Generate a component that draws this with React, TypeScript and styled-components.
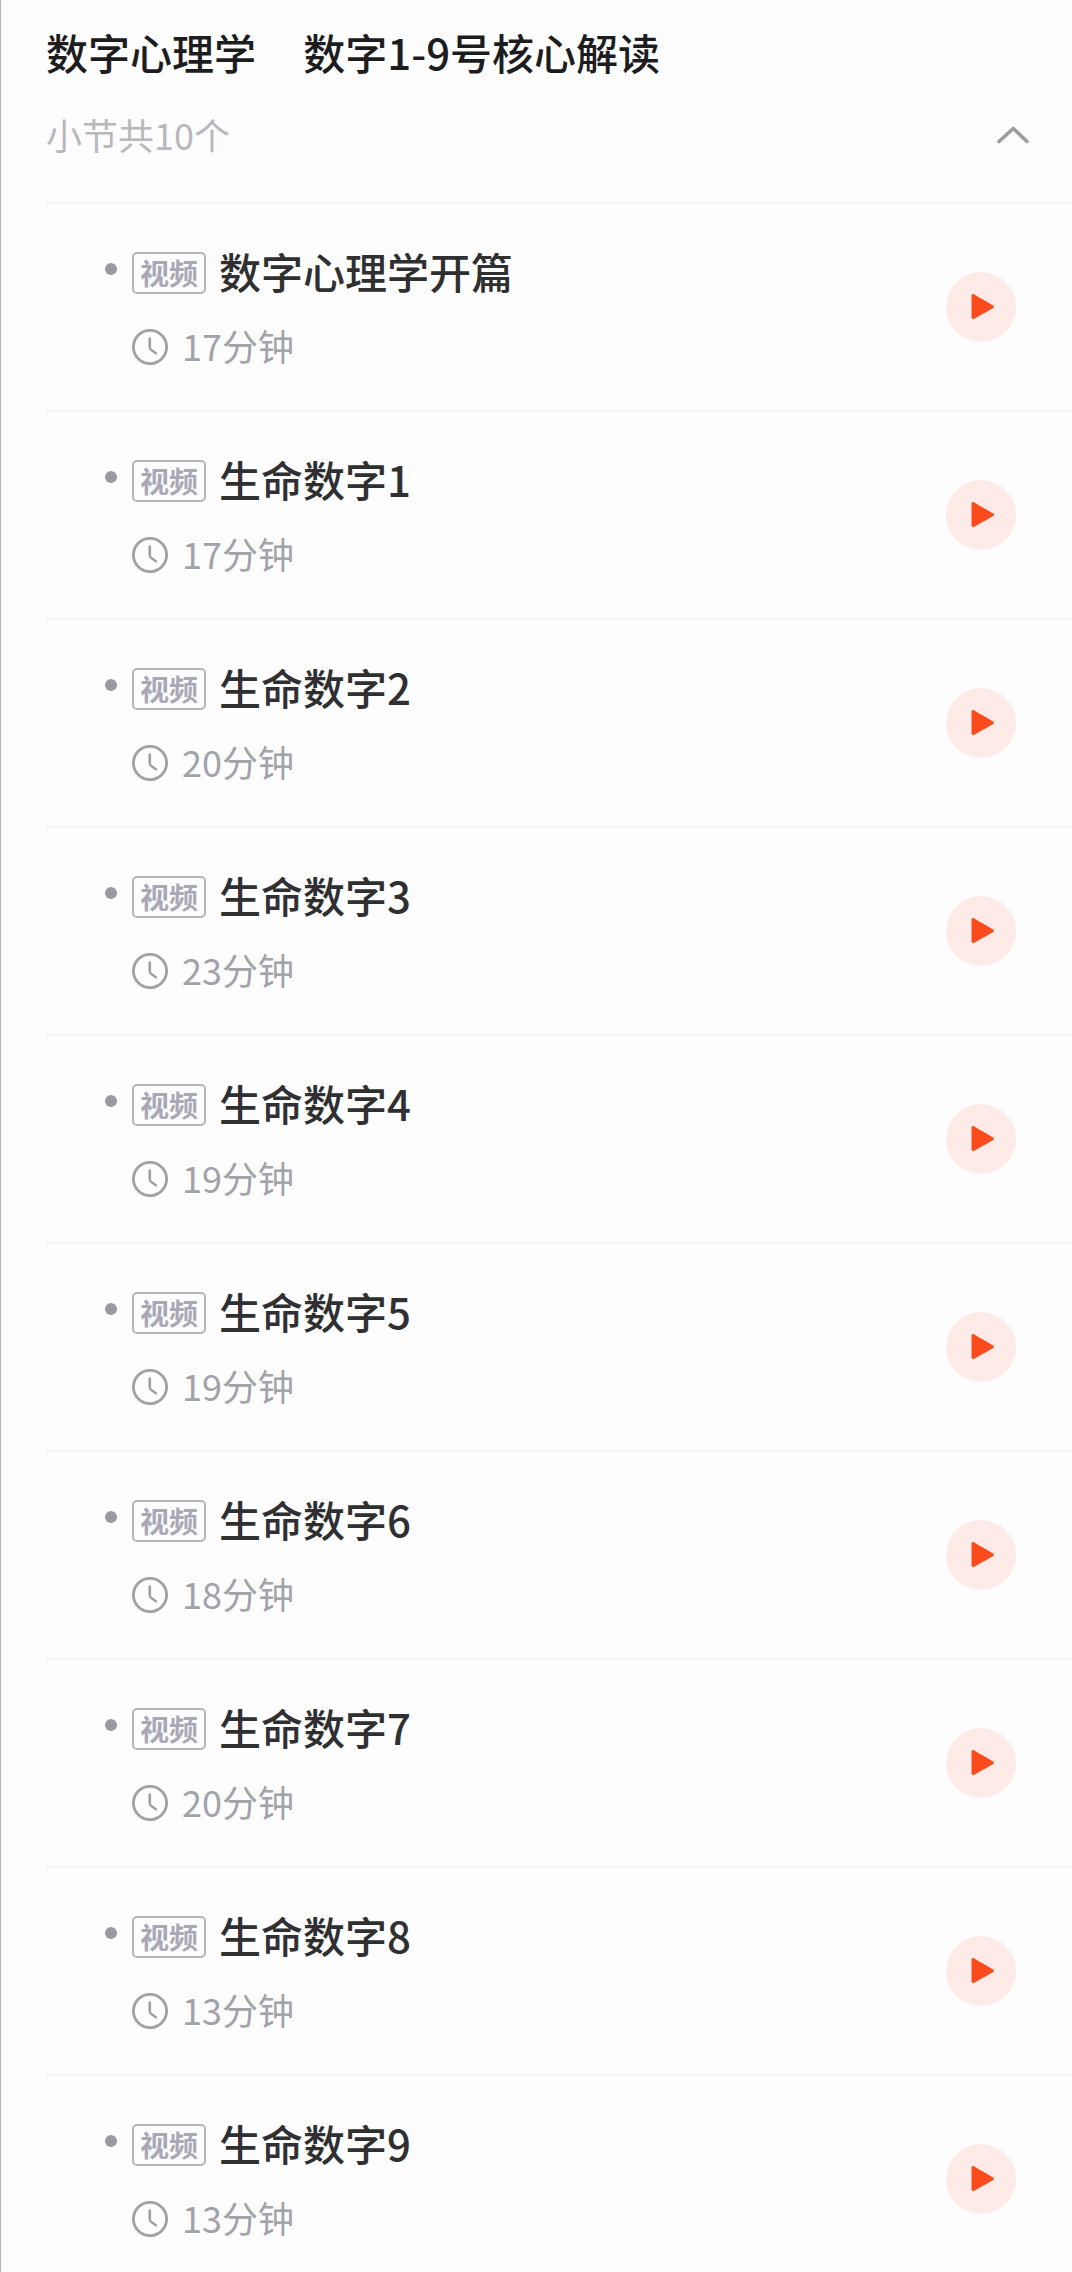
import { useState } from 'react';
import styled, { createGlobalStyle } from 'styled-components';

type Lesson = {
	title: string;
	minutes: number;
};

const AppColor = {
	pageBg: '#fdfdfd',
	edge: '#b4b4b4',
	line: '#f3f3f4',
	heading: '#1d1d1f',
	text: '#303032',
	subText: '#b8b8bc',
	grayText: '#a2a2aa',
	icon: '#a0a0a6',
	tag: '#a9a8b7',
	tagBorder: '#b4b4ba',
	dot: '#9a9aa6',
	point: '#fc4a1c',
	pointBg: '#feebe8',
};

const lessons: Lesson[] = [
	{ title: '数字心理学开篇', minutes: 17 },
	{ title: '生命数字1', minutes: 17 },
	{ title: '生命数字2', minutes: 20 },
	{ title: '生命数字3', minutes: 23 },
	{ title: '生命数字4', minutes: 19 },
	{ title: '生命数字5', minutes: 19 },
	{ title: '生命数字6', minutes: 18 },
	{ title: '生命数字7', minutes: 20 },
	{ title: '生命数字8', minutes: 13 },
	{ title: '生命数字9', minutes: 13 },
];

const GlobalStyle = createGlobalStyle`
	* {
		box-sizing: border-box;
	}
	body {
		margin: 0;
		background-color: ${AppColor.pageBg};
		font-family: 'Noto Sans CJK SC', sans-serif;
	}
	h1, h2, p, ul {
		margin: 0;
		padding: 0;
	}
	button {
		border: 0;
		padding: 0;
		cursor: pointer;
		font: inherit;
	}
`;
const Chapter = styled.main`
	min-height: 100vh;
	padding-left: 45px;
	border-left: 1px solid ${AppColor.edge};
`;
const ChapterHeader = styled.header`
	padding: 22px 42px 36px 0;
`;
const ChapterTitle = styled.h1`
	font-size: 42px;
	font-weight: 500;
	line-height: 60px;
	color: ${AppColor.heading};
	white-space: pre-wrap;
`;
const ChapterSummary = styled.div`
	display: flex;
	align-items: center;
	justify-content: space-between;
	margin-top: 22px;
	font-size: 36px;
	line-height: 60px;
	color: ${AppColor.subText};
	> p {
		padding-bottom: 2px;
	}
`;
const ToggleButton = styled.button<{ $open: boolean }>`
	display: flex;
	background: none;
	color: #9c9c9c;
	transform: ${({ $open }) => ($open ? 'none' : 'rotate(180deg)')};
`;
const LessonList = styled.ul`
	list-style: none;
`;
const LessonRow = styled.li`
	display: flex;
	align-items: center;
	justify-content: space-between;
	padding: 39px 56px 39px 59px;
	border-top: 2px solid ${AppColor.line};
`;
const LessonHead = styled.div`
	display: flex;
	align-items: center;
`;
const Dot = styled.span`
	flex: none;
	width: 12px;
	height: 12px;
	margin: 0 15px 8px 0;
	border-radius: 50%;
	background-color: ${AppColor.dot};
`;
const Tag = styled.span`
	flex: none;
	padding: 0 6px 2px;
	margin-right: 13px;
	border: 2px solid ${AppColor.tagBorder};
	border-radius: 5px;
	font-size: 29px;
	font-weight: 700;
	line-height: 36px;
	color: ${AppColor.tag};
`;
const LessonTitle = styled.h2`
	padding-bottom: 4px;
	font-size: 42px;
	font-weight: 500;
	line-height: 56px;
	color: ${AppColor.text};
`;
const Duration = styled.p`
	display: flex;
	align-items: center;
	gap: 14px;
	margin-top: 20px;
	padding-left: 27px;
	font-size: 36px;
	line-height: 44px;
	color: ${AppColor.grayText};
	> span {
		padding-bottom: 4px;
	}
	> svg {
		color: ${AppColor.icon};
	}
`;
const PlayButton = styled.button`
	flex: none;
	display: flex;
	align-items: center;
	justify-content: center;
	width: 70px;
	height: 70px;
	border-radius: 50%;
	background-color: ${AppColor.pointBg};
	color: ${AppColor.point};
`;

const ChevronIcon = () => (
	<svg width="34" height="20" viewBox="0 0 34 20" fill="none" aria-hidden="true">
		<path d="M3 16.5 17.3 3.5 31 16.5" stroke="currentColor" strokeWidth="3.6" strokeLinecap="round" strokeLinejoin="round" />
	</svg>
);
const ClockIcon = () => (
	<svg width="36" height="36" viewBox="0 0 36 36" fill="none" aria-hidden="true">
		<circle cx="18" cy="18" r="16.6" stroke="currentColor" strokeWidth="2.8" />
		<path d="M17.8 9.5v9q0 1.4 1.2 2.2l5 3.6" stroke="currentColor" strokeWidth="2.6" strokeLinecap="round" />
	</svg>
);
const PlayIcon = () => (
	<svg width="70" height="70" viewBox="0 0 70 70" aria-hidden="true">
		<path
			d="M27 23.6v22L46.5 34.8Z"
			fill="currentColor"
			stroke="currentColor"
			strokeWidth="3"
			strokeLinejoin="round"
		/>
	</svg>
);

const LessonItem = ({ lesson }: { lesson: Lesson }) => (
	<LessonRow>
		<div>
			<LessonHead>
				<Dot />
				<Tag>视频</Tag>
				<LessonTitle>{lesson.title}</LessonTitle>
			</LessonHead>
			<Duration>
				<ClockIcon />
				<span>{lesson.minutes}分钟</span>
			</Duration>
		</div>
		<PlayButton type={'button'} aria-label={`播放 ${lesson.title}`}>
			<PlayIcon />
		</PlayButton>
	</LessonRow>
);

const App = () => {
	const [open, setOpen] = useState(true);
	return (
		<>
			<GlobalStyle />
			<Chapter>
				<ChapterHeader>
					<ChapterTitle>{'数字心理学     数字1-9号核心解读'}</ChapterTitle>
					<ChapterSummary>
						<p>小节共{lessons.length}个</p>
						<ToggleButton
							type={'button'}
							$open={open}
							aria-expanded={open}
							aria-label={open ? '收起' : '展开'}
							onClick={() => setOpen((v) => !v)}
						>
							<ChevronIcon />
						</ToggleButton>
					</ChapterSummary>
				</ChapterHeader>
				{open && (
					<LessonList>
						{lessons.map((lesson) => (
							<LessonItem key={lesson.title} lesson={lesson} />
						))}
					</LessonList>
				)}
			</Chapter>
		</>
	);
};

export default App;
